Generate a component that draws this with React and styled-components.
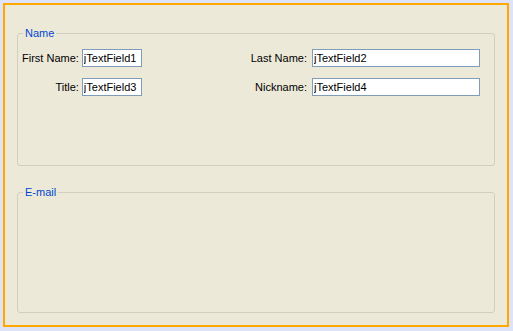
import React from 'react'
import styled, { createGlobalStyle } from 'styled-components'

const GlobalStyle = createGlobalStyle`
  html, body {
    margin: 0;
    padding: 0;
    background: #dfe3f7;
  }
  body {
    font-family: "Liberation Sans", Arial, sans-serif;
    font-size: 11px;
  }
`

const Page = styled.div`
  box-sizing: border-box;
  height: 100vh;
  padding: 3px 4px 4px 3px;
`

const Frame = styled.div`
  box-sizing: border-box;
  height: 100%;
  border: 2px solid #ffa800;
  background: #ece9d8;
  padding: 22px 12px 12px 12px;
  display: flex;
  flex-direction: column;
  gap: 20px;
`

const Group = styled.fieldset`
  box-sizing: border-box;
  margin: 0;
  min-width: 0;
  border: 1px solid #d0d0bf;
  border-radius: 3px;
  padding: 9px 14px 0 4px;
  height: ${p => (p.$grow ? 'auto' : '139px')};
  flex: ${p => (p.$grow ? '1' : 'none')};
`

const Legend = styled.legend`
  margin-left: 1px;
  padding: 0 2px;
  color: #0046d5;
  font-size: 11px;
  line-height: 13px;
`

const FormGrid = styled.div`
  display: grid;
  grid-template-columns: auto 60px 1fr 168px;
  column-gap: 3px;
  row-gap: 11px;
  align-items: center;
`

const Label = styled.label`
  color: #000;
  white-space: nowrap;
  justify-self: end;
  margin-right: ${p => (p.$wide ? '2px' : '0')};
`

const Field = styled.input`
  box-sizing: border-box;
  height: 18px;
  width: 100%;
  border: 1px solid #7f9db9;
  background: #fff;
  padding: 0 1px;
  margin: 0;
  font-family: "Liberation Sans", Arial, sans-serif;
  font-size: 11px;
  color: #000;
  outline: none;
`

const App = () => {
  return (
    <Page>
      <GlobalStyle />
      <Frame>
        <Group>
          <Legend>Name</Legend>
          <FormGrid>
            <Label htmlFor='first'>First Name:</Label>
            <Field id='first' defaultValue='jTextField1' />
            <Label htmlFor='last' $wide>Last Name:</Label>
            <Field id='last' defaultValue='jTextField2' />
            <Label htmlFor='title'>Title:</Label>
            <Field id='title' defaultValue='jTextField3' />
            <Label htmlFor='nick' $wide>Nickname:</Label>
            <Field id='nick' defaultValue='jTextField4' />
          </FormGrid>
        </Group>
        <Group $grow>
          <Legend>E-mail</Legend>
        </Group>
      </Frame>
    </Page>
  )
}

export default App
